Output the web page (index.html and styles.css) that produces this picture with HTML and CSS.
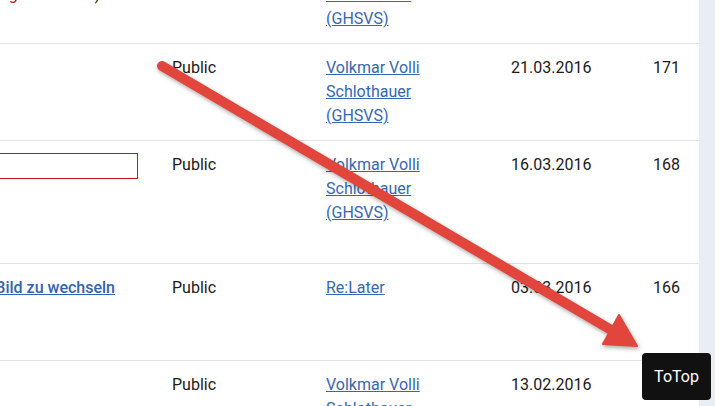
FILE: index.html
```html
<!DOCTYPE html>
<html lang="de">
<head>
<meta charset="utf-8">
<title>Artikel</title>
<link rel="stylesheet" href="styles.css">
</head>
<body>
<div class="page">
  <div class="main">
    <table class="list">
      <colgroup>
        <col class="c-title"><col class="c-access"><col class="c-author"><col class="c-date"><col class="c-hits">
      </colgroup>
      <tbody>
        <tr>
          <td class="title">
            <div class="line">Artikel</div>
            <div class="line note"><span class="warn">Achtung</span> nicht aktiv)</div>
            <div class="line"></div>
          </td>
          <td>Public</td>
          <td class="author"><a href="#">Volkmar Volli Schlothauer (GHSVS)</a></td>
          <td>24.03.2016</td>
          <td class="hits">174</td>
        </tr>
        <tr>
          <td class="title"><div class="line">Plugin</div></td>
          <td>Public</td>
          <td class="author"><a href="#">Volkmar Volli Schlothauer (GHSVS)</a></td>
          <td>21.03.2016</td>
          <td class="hits">171</td>
        </tr>
        <tr>
          <td class="title">
            <div class="field"></div>
            <div class="desc">Text</div>
          </td>
          <td>Public</td>
          <td class="author"><a href="#">Volkmar Volli Schlothauer (GHSVS)</a></td>
          <td>16.03.2016</td>
          <td class="hits">168</td>
        </tr>
        <tr>
          <td class="title">
            <div class="line linkline"><a class="tlink" href="#">Klicken, um das Bild zu wechseln</a></div>
            <div class="line">Slider</div>
            <div class="line">Bild</div>
          </td>
          <td>Public</td>
          <td class="author"><a href="#">Re:Later</a></td>
          <td>03.03.2016</td>
          <td class="hits">166</td>
        </tr>
        <tr>
          <td class="title"><div class="line">Modul</div></td>
          <td>Public</td>
          <td class="author"><a href="#">Volkmar Volli Schlothauer (GHSVS)</a></td>
          <td>13.02.2016</td>
          <td class="hits">163</td>
        </tr>
      </tbody>
    </table>
  </div>
  <div class="side"></div>
</div>

<svg class="arrow" width="715" height="406" viewBox="0 0 715 406" aria-hidden="true">
  <g class="arrow-shape">
    <line x1="162" y1="66" x2="613" y2="331" stroke="#e2453b" stroke-width="10" stroke-linecap="round"/>
    <polygon points="603,344 619,315 637,346" fill="#e2453b" stroke="#e2453b" stroke-width="2" stroke-linejoin="round"/>
  </g>
</svg>

<a class="totop" href="#">ToTop</a>
</body>
</html>
```

FILE: styles.css
```css
html, body {
  margin: 0;
  padding: 0;
}
body {
  font-family: Roboto, "Liberation Sans", Arial, sans-serif;
  font-size: 16px;
  line-height: 24px;
  color: #1a1a1a;
  background: #ffffff;
  overflow: hidden;
  width: 715px;
  height: 406px;
}
.page {
  display: flex;
  width: 715px;
  height: 406px;
}
.main {
  width: 699px;
  flex: none;
  overflow: hidden;
  background: #ffffff;
}
.side {
  flex: 1;
  background: #e9eef5;
}
.list {
  border-collapse: collapse;
  table-layout: fixed;
  width: 1059px;
  margin-left: -360px;
  margin-top: -54px;
}
.c-title { width: 520px; }
.c-access { width: 154px; }
.c-author { width: 185px; }
.c-date { width: 135px; }
.c-hits { width: 65px; }
.list td {
  padding: 12px;
  vertical-align: top;
  border-top: 1px solid #dfe1e4;
}
.list td.author {
  padding-right: 40px;
}
.list td.hits {
  text-align: right;
  padding-right: 19px;
}
.list a {
  color: #3468b3;
  text-decoration: underline;
}
.title {
  text-align: left;
}
.line {
  height: 24px;
  white-space: nowrap;
}
.note {
  text-align: right;
  padding-right: 48px;
}
.warn {
  color: #d0021b;
}
.linkline {
  text-align: right;
  padding-right: 33px;
}
.list a.tlink {
  font-weight: 500;
  color: #2f64b0;
}
.field {
  height: 24px;
  width: 400px;
  margin-left: auto;
  margin-right: 10px;
  border: 1px solid #c4161c;
}
.desc {
  height: 72px;
}
.arrow {
  position: absolute;
  left: 0;
  top: 0;
  pointer-events: none;
}
.arrow-shape {
  filter: drop-shadow(1px 2px 2px rgba(0, 0, 0, 0.35));
}
.totop {
  position: fixed;
  right: 4px;
  bottom: 6px;
  width: 69px;
  height: 47px;
  display: flex;
  align-items: center;
  justify-content: center;
  background: #111111;
  color: #ffffff;
  border-radius: 4px;
  text-decoration: none;
  font-size: 16px;
}
```
